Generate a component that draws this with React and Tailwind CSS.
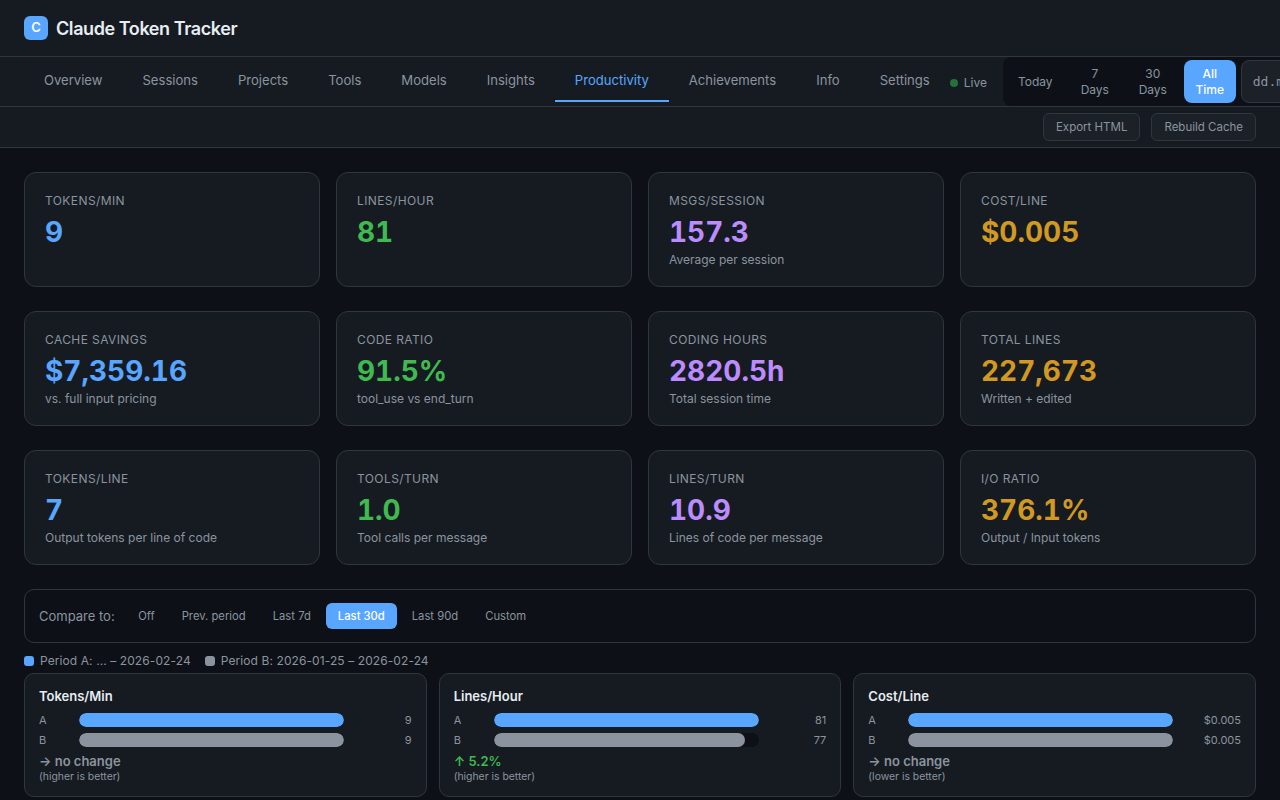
import React from "react";

const tabs = ["Overview", "Sessions", "Projects", "Tools", "Models", "Insights", "Productivity", "Achievements", "Info", "Settings"];
const colors = ["text-[#58a6ff]", "text-[#3fb950]", "text-[#bc8cff]", "text-[#d29922]"];
const stats = [
  [["TOKENS/MIN", "9", ""], ["LINES/HOUR", "81", ""], ["MSGS/SESSION", "157.3", "Average per session"], ["COST/LINE", "$0.005", ""]],
  [["CACHE SAVINGS", "$7,359.16", "vs. full input pricing"], ["CODE RATIO", "91.5%", "tool_use vs end_turn"], ["CODING HOURS", "2820.5h", "Total session time"], ["TOTAL LINES", "227,673", "Written + edited"]],
  [["TOKENS/LINE", "7", "Output tokens per line of code"], ["TOOLS/TURN", "1.0", "Tool calls per message"], ["LINES/TURN", "10.9", "Lines of code per message"], ["I/O RATIO", "376.1%", "Output / Input tokens"]],
];
const compare = [
  { t: "Tokens/Min", a: "9", b: "9", pb: 100, d: "→ no change", up: false, n: "(higher is better)" },
  { t: "Lines/Hour", a: "81", b: "77", pb: 95, d: "↑ 5.2%", up: true, n: "(higher is better)" },
  { t: "Cost/Line", a: "$0.005", b: "$0.005", pb: 100, d: "→ no change", up: false, n: "(lower is better)" },
];

function Bar({ label, value, pct, color }) {
  return (
    <div className="flex items-center h-[14px] text-[11px] text-[#8b949e]">
      <span className="w-[40px] shrink-0">{label}</span>
      <div className="w-[265px] h-[14px] rounded-full bg-[#0d1117] overflow-hidden shrink-0">
        <div className={`h-full rounded-full ${color}`} style={{ width: `${pct}%` }} />
      </div>
      <span className="flex-1 text-right">{value}</span>
    </div>
  );
}

export default function App() {
  return (
    <div className="w-[1280px] h-[800px] overflow-hidden bg-[#0d1117] text-[#e6edf3] font-['Inter',sans-serif]">
      <header className="h-[57px] px-6 flex items-center gap-2 bg-[#161b22] border-b border-[#30363d]">
        <div className="w-6 h-6 rounded-md bg-[#58a6ff] text-white flex items-center justify-center text-[13px] font-semibold">C</div>
        <h1 className="mt-px text-lg font-semibold tracking-[-0.42px] text-[#e6edf3]">Claude Token Tracker</h1>
      </header>

      <nav className="h-[50px] pl-6 flex items-stretch bg-[#161b22] border-b border-[#30363d]">
        <div className="flex shrink-0">
          {tabs.map((t) => (
            <div
              key={t}
              className={
                t === "Productivity"
                  ? "px-5 flex items-center pt-[5px] text-[13.08px] text-[#58a6ff] border-b-2 border-[#58a6ff] h-[45px]"
                  : "px-5 flex items-center pt-[5px] text-[13.08px] text-[#8b949e] border-b-2 border-transparent h-[45px]"
              }
            >
              {t}
            </div>
          ))}
        </div>
        <div className="flex items-center gap-1.5 shrink-0 w-[53px] pt-[3px] text-xs text-[#8b949e]">
          <span className="w-2 h-2 rounded-full bg-[#26713a]" />
          Live
        </div>
        <div className="flex items-center shrink-0 h-[49px] pl-[3px] rounded-lg bg-[#0d1117]">
          <div className="w-[59px] h-[43px] flex items-center justify-center text-xs text-[#8b949e]">Today</div>
          <div className="w-[60px] h-[43px] flex items-center justify-center text-center text-xs leading-[16px] text-[#8b949e]">7<br />Days</div>
          <div className="w-[56px] h-[43px] flex items-center justify-center text-center text-xs leading-[16px] text-[#8b949e]">30<br />Days</div>
          <div className="ml-[3px] w-[52px] h-[43px] rounded-lg bg-[#58a6ff] flex items-center justify-center text-center text-xs leading-[16px] font-medium text-white">All<br />Time</div>
          <div className="ml-[5px] w-[120px] h-[43px] rounded-lg border border-[#30363d] bg-[#1c2128] flex items-center pl-[11px] text-[13px] font-['DejaVu_Sans_Mono',monospace] text-[#8b949e] shrink-0">dd.mm.yyyy</div>
        </div>
      </nav>

      <div className="h-[41px] px-6 flex items-center justify-end gap-[11px] bg-[#161b22] border-b border-[#30363d]">
        <button className="h-[28px] px-3 pt-px rounded-md border border-[#30363d] bg-[#1c2128] text-[11.5px] text-[#8b949e]">Export HTML</button>
        <button className="h-[28px] px-3 pt-px rounded-md border border-[#30363d] bg-[#1c2128] text-[11.5px] text-[#8b949e]">Rebuild Cache</button>
      </div>

      <main className="px-6 pt-6">
        <div className="flex flex-col gap-6">
          {stats.map((row, i) => (
            <div key={i} className="grid grid-cols-4 gap-4">
              {row.map(([l, v, s], j) => (
                <div key={l} className="h-[115px] rounded-xl border border-[#30363d] bg-[#161b22] p-5">
                  <div className="text-xs leading-[15px] tracking-[0.4px] text-[#8b949e]">{l}</div>
                  <div className={`mt-[7px] text-[28px] leading-[34px] font-bold tabular-nums ${colors[j]}`}>{v}</div>
                  {s && <div className="mt-[3px] text-xs leading-[15px] text-[#8b949e]">{s}</div>}
                </div>
              ))}
            </div>
          ))}
        </div>

        <div className="mt-6 h-[54px] px-[14px] flex items-center gap-[11.5px] rounded-[10px] border border-[#30363d]">
          <span className="mt-px text-[13px] text-[#8b949e]">Compare to:</span>
          <div className="flex gap-[3px]">
            {["Off", "Prev. period", "Last 7d", "Last 30d", "Last 90d", "Custom"].map((b) => (
              <div
                key={b}
                className={
                  b === "Last 30d"
                    ? "h-[26px] px-3 flex items-center rounded-md bg-[#58a6ff] text-[11.25px] font-medium text-white"
                    : "h-[26px] px-3 flex items-center rounded-md text-[11.25px] text-[#8b949e]"
                }
              >
                {b}
              </div>
            ))}
          </div>
        </div>

        <div className="mt-[10px] h-[15px] flex items-center gap-[14px] text-xs tracking-[0.09px] text-[#8b949e]">
          <span className="flex items-center gap-1.5"><span className="w-2.5 h-2.5 rounded-[3px] bg-[#58a6ff]" />Period A: ... – 2026-02-24</span>
          <span className="flex items-center gap-1.5"><span className="w-2.5 h-2.5 rounded-[3px] bg-[#8b949e]" />Period B: 2026-01-25 – 2026-02-24</span>
        </div>

        <div className="mt-[5px] grid grid-cols-3 gap-3">
          {compare.map((c) => (
            <div key={c.t} className="h-[124px] rounded-[10px] border border-[#30363d] bg-[#161b22] px-[14px] pt-[15px]">
              <div className="text-[13px] leading-[15px] font-semibold text-[#e6edf3]">{c.t}</div>
              <div className="mt-[9px] flex flex-col gap-[6px]">
                <Bar label="A" value={c.a} pct={100} color="bg-[#58a6ff]" />
                <Bar label="B" value={c.b} pct={c.pb} color="bg-[#8b949e]" />
              </div>
              <div className={`mt-[6px] text-[13px] leading-[16px] font-semibold ${c.up ? "text-[#3fb950]" : "text-[#8b949e]"}`}>{c.d}</div>
              <div className="mt-px text-[10.4px] leading-[13px] text-[#8b949e]">{c.n}</div>
            </div>
          ))}
        </div>
      </main>
    </div>
  );
}
